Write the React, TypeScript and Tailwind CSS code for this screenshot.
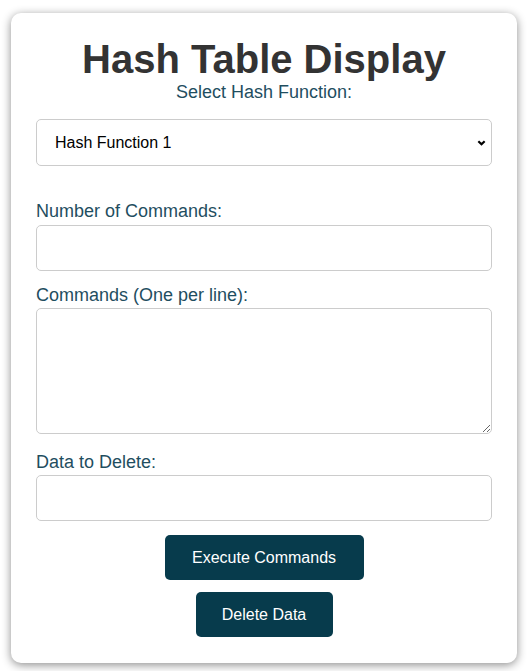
import React from "react";

export default function App() {
  return (
    <div className="min-h-screen bg-white pt-[13px] font-['Liberation_Sans',Arial,sans-serif]">
      <div className="ml-[11px] w-[506px] rounded-[10px] bg-white px-[25px] pt-[23px] pb-[26px] shadow-[0_2px_10px_rgba(0,0,0,0.45)]">
        <h1 className="text-center text-[40px] font-bold leading-[46px] text-[#333333]">
          Hash Table Display
        </h1>
        <label className="block text-center text-[18px] leading-[21px] text-[#1f4e5f]">
          Select Hash Function:
        </label>

        <div className="relative mt-[16px]">
          <select className="block h-[47px] w-full appearance-none rounded-[5px] border border-[#cccccc] bg-white pl-[18px] text-[16px] text-black outline-none">
            <option>Hash Function 1</option>
            <option>Hash Function 2</option>
          </select>
          {/* chevron */}
          <svg
            className="pointer-events-none absolute right-[6px] top-[19px] h-[9px] w-[9px]"
            viewBox="0 0 10 10"
            fill="none"
            stroke="black"
            strokeWidth={2.4}
          >
            <path d="M1.5 3.5L5 7l3.5-3.5" />
          </svg>
        </div>

        <label className="mt-[35px] block text-[18px] leading-[21px] text-[#1f4e5f]">
          Number of Commands:
        </label>
        <input
          type="text"
          className="mt-[3px] block h-[46px] w-full rounded-[5px] border border-[#cccccc] bg-white outline-none"
        />

        <label className="mt-[14px] block text-[18px] leading-[21px] text-[#1f4e5f]">
          Commands (One per line):
        </label>
        <textarea className="mt-[2px] block h-[126px] w-full rounded-[5px] border border-[#cccccc] bg-white outline-none" />

        <label className="mt-[18px] block text-[18px] leading-[21px] text-[#1f4e5f]">
          Data to Delete:
        </label>
        <input
          type="text"
          className="mt-[2px] block h-[46px] w-full rounded-[5px] border border-[#cccccc] bg-white outline-none"
        />

        <div className="mt-[14px] flex flex-col items-center gap-[12px]">
          <button className="h-[45px] w-[199px] rounded-[5px] bg-[#073b4c] text-[16px] text-white">
            Execute Commands
          </button>
          <button className="h-[45px] w-[137px] rounded-[5px] bg-[#073b4c] text-[16px] text-white">
            Delete Data
          </button>
        </div>
      </div>
    </div>
  );
}
